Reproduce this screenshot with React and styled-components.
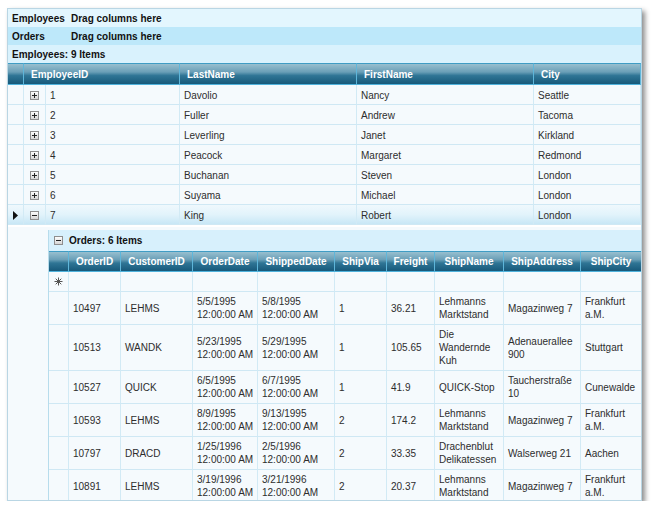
import React from 'react';
import styled, { createGlobalStyle } from 'styled-components';

const GlobalStyle = createGlobalStyle`
  body {
    margin: 0;
    background: #fff;
    font-family: "Liberation Sans", Arial, sans-serif;
  }
`;

const Page = styled.div`
  padding: 8px 0 0 7px;
`;

const Panel = styled.div`
  width: 635px;
  height: 493px;
  box-sizing: border-box;
  border: 1px solid #b9d6e4;
  background: #f5fafd;
  box-shadow: 3px 3px 5px rgba(0, 0, 0, 0.45);
  overflow: hidden;
  font-size: 10px;
  color: #2d2d2d;
`;

const GroupRow = styled.div`
  display: flex;
  align-items: center;
  height: 18px;
  padding-left: 4px;
  background: ${(p) => p.$bg};
  font-weight: bold;
  color: #111;
`;

const GroupLabel = styled.span`
  width: 59px;
`;

const Table = styled.table`
  width: ${(p) => p.$w}px;
  table-layout: fixed;
  border-collapse: separate;
  border-spacing: 0;
  font-size: 10px;
  color: #2d2d2d;
`;

const Col = styled.col`
  width: ${(p) => p.$w}px;
`;

const HeadCell = styled.th`
  box-sizing: border-box;
  height: ${(p) => p.$h || 22}px;
  padding: 0 ${(p) => (p.$center ? 0 : 7)}px;
  text-align: ${(p) => (p.$center ? 'center' : 'left')};
  color: #fff;
  font-weight: bold;
  white-space: nowrap;
  background: linear-gradient(#98bfcf 0%, #6a9fb7 40%, #2f7595 58%, #17597a 100%);
  border-right: 1px solid #5fb6da;
  border-bottom: 1px solid #4fb2dc;
  border-top: 1px solid #3f9cc4;
`;

const Cell = styled.td`
  box-sizing: border-box;
  height: 20px;
  padding: 1px 4px 0;
  white-space: nowrap;
  background: ${(p) =>
    p.$selected ? 'linear-gradient(#eff8fd 0%, #e2f3fb 50%, #c8e7f6 100%)' : '#f5fafd'};
  border-right: 1px solid #d2eaf5;
  border-bottom: 1px solid #cfe8f4;
  vertical-align: middle;
`;

const IconSlot = styled.div`
  display: flex;
  justify-content: center;
  align-items: center;
`;

const DetailHost = styled.td`
  padding: 3px 0 0 2px;
  background: #f5fafd;
  border-top: 2px solid #fff;
  vertical-align: top;
`;

const DetailGap = styled.td`
  background: #f5fafd;
  border-top: 2px solid #fff;
`;

const DetailBox = styled.div`
  border-left: 1px solid #b7dcec;
`;

const DetailTitle = styled.div`
  display: flex;
  align-items: center;
  gap: 6px;
  height: 21px;
  padding-left: 5px;
  background: #d7f0fc;
  font-weight: bold;
  color: #111;
`;

const OrderCell = styled.td`
  box-sizing: border-box;
  padding: 3px 4px;
  line-height: 13px;
  height: ${(p) => p.$h || 33}px;
  background: #f5fafd;
  border-right: 1px solid #d2eaf5;
  border-bottom: 1px solid #cfe8f4;
  vertical-align: middle;
`;

const Line = styled.div`
  white-space: nowrap;
`;

const ToggleIcon = ({ open }) => (
  <svg width="9" height="9" viewBox="0 0 9 9" style={{ display: 'block' }}>
    <defs>
      <linearGradient id="tg" x1="0" y1="0" x2="0" y2="1">
        <stop offset="0" stopColor="#ffffff" />
        <stop offset="1" stopColor="#d3d3d3" />
      </linearGradient>
    </defs>
    <rect x="0.5" y="0.5" width="8" height="8" fill="url(#tg)" stroke="#8e8e8e" />
    <path d="M2 4.5h5" stroke="#222" />
    {!open && <path d="M4.5 2v5" stroke="#222" />}
  </svg>
);

const RowArrow = () => (
  <svg width="5" height="9" viewBox="0 0 5 9" style={{ display: 'block' }}>
    <polygon points="0,0 5,4.5 0,9" fill="#111" />
  </svg>
);

const NewRowStar = () => (
  <svg width="9" height="9" viewBox="0 0 9 9" style={{ display: 'block' }}>
    <path
      d="M4.5 0.5v8M0.5 4.5h8M1.7 1.7l5.6 5.6M7.3 1.7l-5.6 5.6"
      stroke="#555"
      strokeWidth="1"
    />
  </svg>
);

const employees = [
  [1, 'Davolio', 'Nancy', 'Seattle'],
  [2, 'Fuller', 'Andrew', 'Tacoma'],
  [3, 'Leverling', 'Janet', 'Kirkland'],
  [4, 'Peacock', 'Margaret', 'Redmond'],
  [5, 'Buchanan', 'Steven', 'London'],
  [6, 'Suyama', 'Michael', 'London'],
  [7, 'King', 'Robert', 'London'],
];

const orders = [
  [10497, 'LEHMS', '5/5/1995', '5/8/1995', 1, '36.21', 'Lehmanns Marktstand', 'Magazinweg 7', 'Frankfurt a.M.'],
  [10513, 'WANDK', '5/23/1995', '5/29/1995', 1, '105.65', 'Die Wandernde Kuh', 'Adenauerallee 900', 'Stuttgart'],
  [10527, 'QUICK', '6/5/1995', '6/7/1995', 1, '41.9', 'QUICK-Stop', 'Taucherstraße 10', 'Cunewalde'],
  [10593, 'LEHMS', '8/9/1995', '9/13/1995', 2, '174.2', 'Lehmanns Marktstand', 'Magazinweg 7', 'Frankfurt a.M.'],
  [10797, 'DRACD', '1/25/1996', '2/5/1996', 2, '33.35', 'Drachenblut Delikatessen', 'Walserweg 21', 'Aachen'],
  [10891, 'LEHMS', '3/19/1996', '3/21/1996', 2, '20.37', 'Lehmanns Marktstand', 'Magazinweg 7', 'Frankfurt a.M.'],
];

const orderCols = [
  ['OrderID', 52],
  ['CustomerID', 72],
  ['OrderDate', 65],
  ['ShippedDate', 77],
  ['ShipVia', 52],
  ['Freight', 48],
  ['ShipName', 69],
  ['ShipAddress', 77],
  ['ShipCity', 61],
];

const DateValue = ({ d }) => (
  <>
    <Line>{d}</Line>
    <Line>12:00:00 AM</Line>
  </>
);

const OrdersDetail = () => (
  <DetailBox>
    <DetailTitle>
      <ToggleIcon open />
      <span>Orders: 6 Items</span>
    </DetailTitle>
    <Table $w={593}>
      <colgroup>
        <Col $w={20} />
        {orderCols.map(([n, w]) => (
          <Col key={n} $w={w} />
        ))}
      </colgroup>
      <thead>
        <tr>
          <HeadCell $h={21} />
          {orderCols.map(([n]) => (
            <HeadCell key={n} $h={21} $center>
              {n}
            </HeadCell>
          ))}
        </tr>
      </thead>
      <tbody>
        <tr>
          <OrderCell $h={20}>
            <IconSlot>
              <NewRowStar />
            </IconSlot>
          </OrderCell>
          {orderCols.map(([n]) => (
            <OrderCell key={n} $h={20} />
          ))}
        </tr>
        {orders.map((o) => (
          <tr key={o[0]}>
            <OrderCell />
            <OrderCell>{o[0]}</OrderCell>
            <OrderCell>{o[1]}</OrderCell>
            <OrderCell>
              <DateValue d={o[2]} />
            </OrderCell>
            <OrderCell>
              <DateValue d={o[3]} />
            </OrderCell>
            <OrderCell>{o[4]}</OrderCell>
            <OrderCell>{o[5]}</OrderCell>
            <OrderCell>{o[6]}</OrderCell>
            <OrderCell>{o[7]}</OrderCell>
            <OrderCell>{o[8]}</OrderCell>
          </tr>
        ))}
      </tbody>
    </Table>
  </DetailBox>
);

const App = () => {
  return (
    <Page>
      <GlobalStyle />
      <Panel>
        <GroupRow $bg="#e3f6fe">
          <GroupLabel>Employees</GroupLabel>
          <span>Drag columns here</span>
        </GroupRow>
        <GroupRow $bg="#bde8fa">
          <GroupLabel>Orders</GroupLabel>
          <span>Drag columns here</span>
        </GroupRow>
        <GroupRow $bg="#d9f2fd">Employees: 9 Items</GroupRow>

        <Table $w={633}>
          <colgroup>
            <Col $w={16} />
            <Col $w={22} />
            <Col $w={134} />
            <Col $w={177} />
            <Col $w={177} />
            <Col $w={107} />
          </colgroup>
          <thead>
            <tr>
              <HeadCell />
              <HeadCell colSpan={2}>EmployeeID</HeadCell>
              <HeadCell>LastName</HeadCell>
              <HeadCell>FirstName</HeadCell>
              <HeadCell>City</HeadCell>
            </tr>
          </thead>
          <tbody>
            {employees.map(([id, last, first, city]) => {
              const open = id === 7;
              return (
                <tr key={id}>
                  <Cell $selected={open}>
                    {open && (
                      <IconSlot>
                        <RowArrow />
                      </IconSlot>
                    )}
                  </Cell>
                  <Cell $selected={open}>
                    <IconSlot>
                      <ToggleIcon open={open} />
                    </IconSlot>
                  </Cell>
                  <Cell $selected={open}>{id}</Cell>
                  <Cell $selected={open}>{last}</Cell>
                  <Cell $selected={open}>{first}</Cell>
                  <Cell $selected={open}>{city}</Cell>
                </tr>
              );
            })}
            <tr>
              <DetailGap colSpan={2} />
              <DetailHost colSpan={4}>
                <OrdersDetail />
              </DetailHost>
            </tr>
          </tbody>
        </Table>
      </Panel>
    </Page>
  );
};

export default App;
